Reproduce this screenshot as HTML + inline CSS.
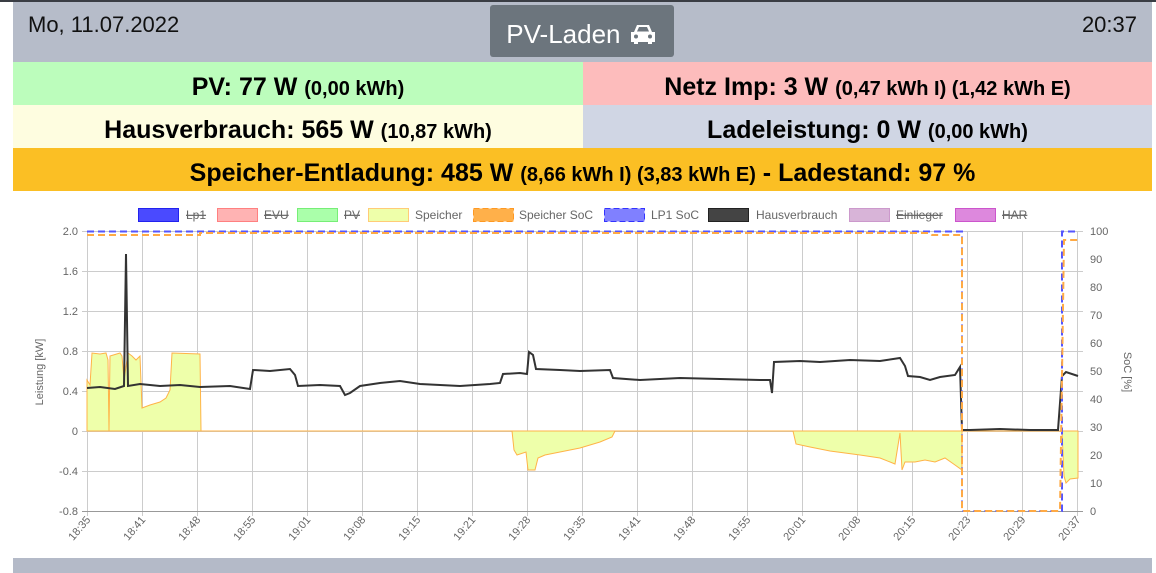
<!DOCTYPE html>
<html><head><meta charset="utf-8"><style>
body{margin:0;width:1156px;height:573px;overflow:hidden;background:#fff;font-family:"Liberation Sans",sans-serif;position:relative}
.top{position:absolute;left:0;top:0;width:1156px;height:2px;background:#3a3d44}
.hdr{position:absolute;left:13px;top:2px;width:1139px;height:60px;background:#b6bcc9}
.date{position:absolute;left:15px;top:10px;font-size:22px;color:#111}
.time{position:absolute;right:15px;top:10px;font-size:22px;color:#111}
.btn{position:absolute;left:477px;top:3px;width:184px;height:52px;background:#6c757d;border-radius:3px;color:#fff;font-size:26px;line-height:58px;text-align:center}
.row{position:absolute;height:43px;line-height:50px;text-align:center;font-weight:bold;font-size:25px;color:#000;white-space:nowrap}
.row small{font-size:20px}
.bot{position:absolute;left:13px;top:558px;width:1139px;height:15px;background:#b4bac8}
</style></head><body>
<div class="top"></div>
<div class="hdr"><div class="date">Mo, 11.07.2022</div>
<div class="btn">PV-Laden <svg width="30" height="22" viewBox="0 0 30 22" style="vertical-align:-2px"><path d="M6 9 L9 2 H21 L24 9 H27 V19 H24 V21 H20 V19 H10 V21 H6 V19 H3 V9 Z" fill="#fff"/><path d="M9 8.5 L11 4 H19 L21 8.5 Z" fill="#6c757d"/><circle cx="8" cy="13.5" r="2" fill="#6c757d"/><circle cx="22" cy="13.5" r="2" fill="#6c757d"/></svg></div>
<div class="time">20:37</div></div>
<div class="row" style="left:13px;top:62px;width:570px;background:#bcfdbc">PV: 77 W <small>(0,00 kWh)</small></div>
<div class="row" style="left:583px;top:62px;width:569px;background:#fdbcbc">Netz Imp: 3 W <small>(0,47 kWh I) (1,42 kWh E)</small></div>
<div class="row" style="left:13px;top:105px;width:570px;background:#fefde0">Hausverbrauch: 565 W <small>(10,87 kWh)</small></div>
<div class="row" style="left:583px;top:105px;width:569px;background:#d0d6e4">Ladeleistung: 0 W <small>(0,00 kWh)</small></div>
<div class="row" style="left:13px;top:148px;width:1139px;background:#fbbf24">Speicher-Entladung: 485 W <small>(8,66 kWh I) (3,83 kWh E)</small> - Ladestand: 97 %</div>
<svg style="position:absolute;left:0;top:195px" width="1156" height="363" viewBox="0 195 1156 363" font-family="Liberation Sans, sans-serif" font-size="11" fill="#666">
<g stroke-width="1" font-size="12">
<rect x="138.5" y="208.5" width="40" height="13" fill="#4a4aff" stroke="#2222ee"/><text x="186" y="219" text-decoration="line-through">Lp1</text>
<rect x="217.5" y="208.5" width="40" height="13" fill="#ffb3b3" stroke="#ff8080"/><text x="264" y="219" text-decoration="line-through">EVU</text>
<rect x="297.5" y="208.5" width="40" height="13" fill="#aaffaa" stroke="#77ee77"/><text x="344" y="219" text-decoration="line-through">PV</text>
<rect x="368.5" y="208.5" width="40" height="13" fill="#eeffaa" stroke="#ffcc77"/><text x="415" y="219">Speicher</text>
<rect x="473.5" y="208.5" width="40" height="13" fill="#ffb04a" stroke="#ff9922" stroke-dasharray="6 3"/><text x="519" y="219">Speicher SoC</text>
<rect x="604.5" y="208.5" width="40" height="13" fill="#8080ff" stroke="#3333ff" stroke-dasharray="6 3"/><text x="651" y="219">LP1 SoC</text>
<rect x="708.5" y="208.5" width="40" height="13" fill="#444" stroke="#222"/><text x="756" y="219">Hausverbrauch</text>
<rect x="849.5" y="208.5" width="40" height="13" fill="#d8b4d8" stroke="#cc99cc"/><text x="896" y="219" text-decoration="line-through">Einlieger</text>
<rect x="955.5" y="208.5" width="40" height="13" fill="#dd88dd" stroke="#cc55cc"/><text x="1002" y="219" text-decoration="line-through">HAR</text>
</g>
<g stroke="#ccc" stroke-width="1">
<path d="M82 231.5H1083M82 271.5H1083M82 311.5H1083M82 351.5H1083M82 391.5H1083M82 431.5H1083M82 471.5H1083"/>
<path d="M87.5 231V516M142.5 231V516M197.5 231V516M252.5 231V516M307.5 231V516M362.5 231V516M417.5 231V516M472.5 231V516M527.5 231V516M582.5 231V516M637.5 231V516M692.5 231V516M747.5 231V516M802.5 231V516M857.5 231V516M912.5 231V516M967.5 231V516M1022.5 231V516M1077.5 231V516"/>
<path d="M82 511.5H1083" stroke="#999"/>
</g>
<g text-anchor="end">
<text x="78" y="235">2.0</text><text x="78" y="275">1.6</text><text x="78" y="315">1.2</text><text x="78" y="355">0.8</text><text x="78" y="395">0.4</text><text x="78" y="435">0</text><text x="78" y="475">-0.4</text><text x="78" y="515">-0.8</text>
</g>
<g>
<text x="1090" y="235">100</text><text x="1090" y="263">90</text><text x="1090" y="291">80</text><text x="1090" y="319">70</text><text x="1090" y="347">60</text><text x="1090" y="375">50</text><text x="1090" y="403">40</text><text x="1090" y="431">30</text><text x="1090" y="459">20</text><text x="1090" y="487">10</text><text x="1090" y="515">0</text>
</g>
<text transform="translate(43,372) rotate(-90)" text-anchor="middle" font-size="11">Leistung [kW]</text>
<text transform="translate(1124,372) rotate(90)" text-anchor="middle" font-size="11">SoC [%]</text>
<g text-anchor="end" font-size="11">
<text transform="translate(91,520) rotate(-50)">18:35</text><text transform="translate(146,520) rotate(-50)">18:41</text><text transform="translate(201,520) rotate(-50)">18:48</text><text transform="translate(256,520) rotate(-50)">18:55</text><text transform="translate(311,520) rotate(-50)">19:01</text><text transform="translate(366,520) rotate(-50)">19:08</text><text transform="translate(421,520) rotate(-50)">19:15</text><text transform="translate(476,520) rotate(-50)">19:21</text><text transform="translate(531,520) rotate(-50)">19:28</text><text transform="translate(586,520) rotate(-50)">19:35</text><text transform="translate(641,520) rotate(-50)">19:41</text><text transform="translate(696,520) rotate(-50)">19:48</text><text transform="translate(751,520) rotate(-50)">19:55</text><text transform="translate(806,520) rotate(-50)">20:01</text><text transform="translate(861,520) rotate(-50)">20:08</text><text transform="translate(916,520) rotate(-50)">20:15</text><text transform="translate(971,520) rotate(-50)">20:23</text><text transform="translate(1026,520) rotate(-50)">20:29</text><text transform="translate(1081,520) rotate(-50)">20:37</text>
</g>
<path d="M87 431V380L90 385L92 353L100 354L106 353L108 360L109 431L110 356L120 353L122 356L124 380L128 353L132 356L136 360L140 356L142 408L150 405L160 402L166 398L170 390L172 353L200 354L201 431H512L514 450L517 455L520 454L526 452L528 470L535 470L538 458L545 455L560 452L580 448L600 442L612 437L615 431H793L796 444L810 447L830 451L860 455L880 458L895 464L900 433L902 470L905 462L915 462L925 460L935 462L945 458L955 465L962 470L962 431H1062L1064 476L1066 483L1070 479L1078 478V431Z" fill="#eeffaa" stroke="#ffb347" stroke-width="1"/>
<path d="M87 388L100 387L115 389L124 386L126 254L128 386L140 384L160 386L180 385L200 387L230 386L250 389L253 370L270 371L290 369L295 375L298 386L320 385L340 386L345 395L350 393L360 386L380 383L400 381L420 384L440 385L460 386L490 384L500 383L503 374L520 373L527 374L529 352L533 355L536 369L560 370L580 371L610 370L613 378L640 380L680 378L720 379L760 380L770 380L772 393L774 362L800 361L820 362L850 360L880 361L900 358L905 366L908 376L920 377L930 380L940 377L955 375L960 367L962 430L970 430L1000 429L1030 430L1058 430L1062 376L1066 372L1078 376" fill="none" stroke="#333" stroke-width="2"/>
<path d="M87 231.5H962V511H1062V231.5H1078" fill="none" stroke="#5555ff" stroke-width="2" stroke-dasharray="7 4"/>
<path d="M87 235H200V233H930L932 235H960L962 235V511H1060L1064 240H1078" fill="none" stroke="#ffaa44" stroke-width="2" stroke-dasharray="7 4"/>
</svg>
<div class="bot"></div>
</body></html>
